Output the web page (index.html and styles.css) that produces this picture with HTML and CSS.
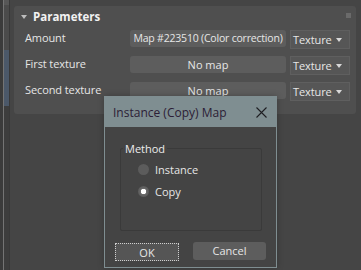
FILE: index.html
```html
<!DOCTYPE html>
<html lang="en">

<head>
    <meta charset="UTF-8" />
    <title>Parameters</title>
    <link rel="stylesheet" href="styles.css">
</head>

<body>

    <!-- left edge of the host window -->
    <div class="side">
        <div class="side-edge"></div>
        <div class="side-rule"></div>
        <div class="side-track">
            <div class="seg seg-top"></div>
            <div class="seg seg-mid"></div>
            <div class="seg seg-sel"></div>
            <div class="seg seg-rest"></div>
        </div>
        <div class="side-gap"></div>
    </div>

    <!-- rollout: Parameters -->
    <div class="main">
        <div class="panel">
            <div class="panel-head">
                <span class="caret"></span>
                <span class="panel-title">Parameters</span>
                <span class="grip"></span>
            </div>
            <div class="param-grid">
                <div class="label">Amount</div>
                <div class="map-btn map-long">Map #223510 (Color correction)</div>
                <div class="drop">Texture <span class="arrow"></span></div>

                <div class="label">First texture</div>
                <div class="map-btn">No map</div>
                <div class="drop">Texture <span class="arrow"></span></div>

                <div class="label">Second texture</div>
                <div class="map-btn">No map</div>
                <div class="drop">Texture <span class="arrow"></span></div>
            </div>
        </div>
    </div>

    <!-- modal window -->
    <div class="dialog">
        <div class="dialog-title">
            <span>Instance (Copy) Map</span>
            <svg class="close" width="11" height="11" viewBox="0 0 11 11">
                <path d="M0.5 0.5 L10.5 10.5 M10.5 0.5 L0.5 10.5" stroke="#1e1e22" stroke-width="1.1" fill="none" />
            </svg>
        </div>
        <div class="dialog-body">
            <fieldset class="group">
                <legend>Method</legend>
                <div class="radio-row"><span class="radio"></span>Instance</div>
                <div class="radio-row"><span class="radio checked"></span>Copy</div>
            </fieldset>
            <div class="btn-row">
                <div class="btn btn-ok">OK</div>
                <div class="btn btn-cancel">Cancel</div>
            </div>
        </div>
    </div>

</body>

</html>
```

FILE: styles.css
```css
* {
    margin: 0;
    padding: 0;
    box-sizing: border-box;
    font-family: 'Open Sans', 'Liberation Sans', sans-serif;
    color: #e6e6e6;
}

body,
html {
    width: 100%;
    height: 100%;
    overflow: hidden;
    background-color: #454545;
}

body {
    display: flex;
    position: relative;
    font-size: 11px;
}

/* left edge */
.side {
    display: flex;
    width: 14px;
    flex-shrink: 0;
}

.side-edge {
    width: 3px;
    background-color: #3b3b3b;
}

.side-rule {
    width: 1px;
    background-color: #747474;
}

.side-track {
    width: 5px;
    display: flex;
    flex-direction: column;
}

.seg-top {
    height: 5px;
    background-color: #575757;
}

.seg-mid {
    height: 45px;
    background-color: #4b4b4b;
}

.seg-sel {
    height: 56px;
    background-color: #4b5869;
}

.seg-rest {
    flex: 1;
    background-color: #3d3d3d;
}

.side-gap {
    width: 1px;
    background-color: #393939;
}

/* rollout */
.main {
    flex: 1;
    padding-top: 6px;
}

.panel {
    width: 342px;
    height: 108px;
    background-color: #4f4f4f;
    border-radius: 3px;
}

.panel-head {
    display: flex;
    align-items: center;
    height: 21px;
    padding-left: 7px;
    position: relative;
}

.caret {
    width: 0;
    height: 0;
    border-left: 3px solid transparent;
    border-right: 3px solid transparent;
    border-top: 4px solid #bdbdbd;
    margin-right: 6px;
}

.panel-title {
    font-weight: 700;
    font-size: 11.5px;
    color: #f2f2f2;
}

.grip {
    position: absolute;
    right: 5px;
    top: 7px;
    width: 5px;
    height: 5px;
    background-image: radial-gradient(circle, #8a8a8a 0.6px, transparent 0.8px);
    background-size: 2px 2px;
}

.param-grid {
    display: grid;
    grid-template-columns: 101px 156px 60px;
    grid-auto-rows: 26px;
    column-gap: 4px;
    padding: 3px 0 0 11px;
}

.label {
    line-height: 15px;
    white-space: nowrap;
    letter-spacing: -0.1px;
}

.map-btn {
    height: 17px;
    line-height: 17px;
    background-color: #5d5d5d;
    border-radius: 3px;
    text-align: center;
    white-space: nowrap;
    overflow: hidden;
}

.map-long {
    font-size: 10.5px;
    letter-spacing: -0.2px;
}

.drop {
    height: 19px;
    line-height: 17px;
    background-color: #565656;
    border: 1px solid #5f5f5f;
    padding-left: 2px;
    position: relative;
    letter-spacing: -0.1px;
}

.arrow {
    position: absolute;
    right: 7px;
    top: 7px;
    border-left: 3px solid transparent;
    border-right: 3px solid transparent;
    border-top: 4px solid #d8d8d8;
}

/* dialog */
.dialog {
    position: absolute;
    left: 104px;
    top: 96px;
    width: 173px;
    height: 172px;
    border: 1px solid #7f8e91;
    background-color: #444444;
    display: flex;
    flex-direction: column;
    box-shadow: 0 0 6px rgba(0, 0, 0, 0.25);
}

.dialog-title {
    height: 30px;
    background-color: #7f8e91;
    display: flex;
    align-items: center;
    justify-content: space-between;
    padding: 0 9px 0 8px;
}

.dialog-title span {
    font-size: 12px;
    color: #2c1d36;
}

.close {
    display: block;
}

.dialog-body {
    flex: 1;
    padding: 14px 14px 0 15px;
    display: flex;
    flex-direction: column;
}

.group {
    border: 1px solid #3a3a3a;
    border-radius: 2px;
    height: 90px;
    padding: 2px 0 0 0;
}

.group legend {
    padding: 0 2px;
    margin-left: 2px;
    color: #ececec;
}

.radio-row {
    display: flex;
    align-items: center;
    height: 22px;
    gap: 6px;
    margin-left: 17px;
}

.radio {
    width: 11px;
    height: 11px;
    border-radius: 50%;
    background-color: #5c5c5c;
}

.radio.checked {
    background: radial-gradient(circle, #ffffff 0 2.5px, #6a6a6a 3px, #5a5a5a 5.5px);
}

.btn-row {
    display: flex;
    justify-content: space-between;
    padding-top: 11px;
    margin: 0 -4px 0 -5px;
}

.btn {
    height: 18px;
    line-height: 17px;
    text-align: center;
    background-color: #555555;
}

.btn-ok {
    width: 64px;
    border: 1px dotted #cfcfcf;
    margin-top: 1px;
}

.btn-cancel {
    width: 73px;
    background-color: #5d5d5d;
    border-radius: 3px;
}
```
